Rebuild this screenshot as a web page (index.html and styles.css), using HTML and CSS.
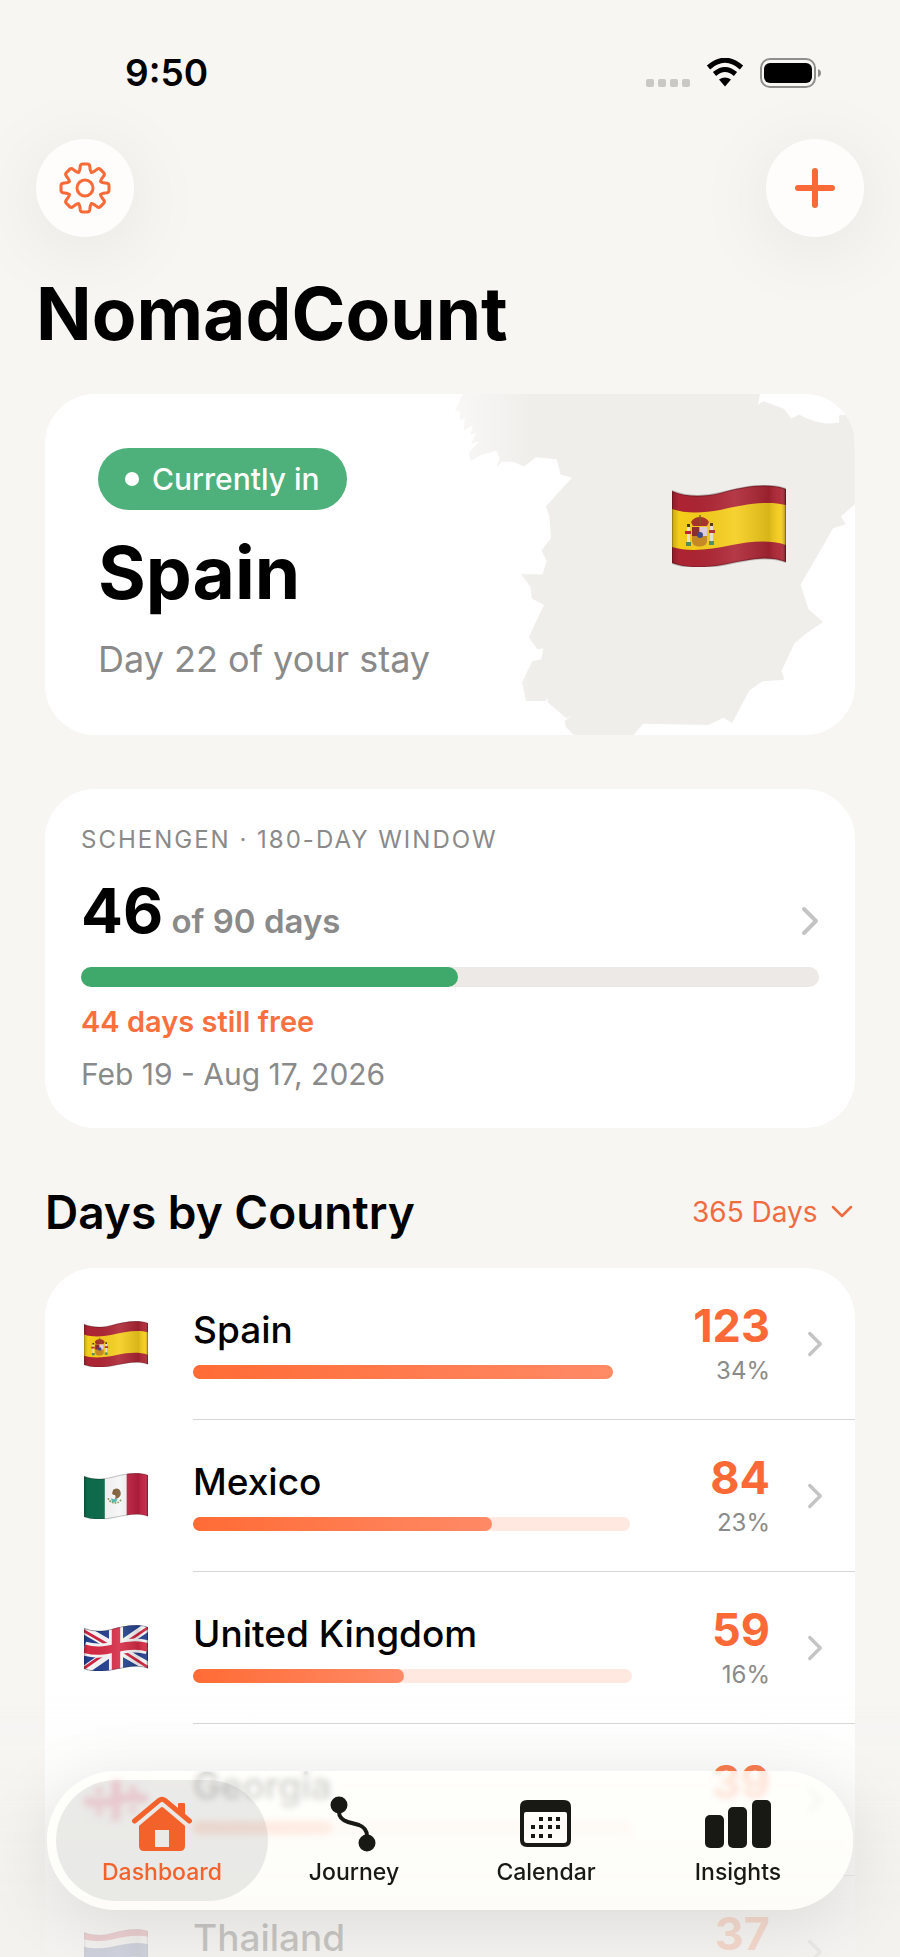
FILE: index.html
```html
<!DOCTYPE html>
<html lang="en">
  <head>
    <meta charset="UTF-8" />
    <meta name="viewport" content="width=device-width, initial-scale=1.0, viewport-fit=cover" />
    <title>NomadCount</title>
    <link rel="stylesheet" href="styles.css">
  </head>

  <body>
    <!-- shared icons and flags -->
    <svg class="defs" width="0" height="0" aria-hidden="true">
      <defs>
        <clipPath id="wave">
          <path d="M0 6C14 12 32 12 48 8C70 2 94 -3 114 4V77C96 70 76 75 60 78C38 83 16 84 0 78Z" />
        </clipPath>
        <linearGradient id="cloth" x1="0" x2="1" y1="0" y2="0">
          <stop offset="0" stop-color="#000" stop-opacity="0.2" />
          <stop offset="0.06" stop-color="#000" stop-opacity="0" />
          <stop offset="0.55" stop-color="#fff" stop-opacity="0.1" />
          <stop offset="0.85" stop-color="#000" stop-opacity="0.12" />
          <stop offset="0.95" stop-color="#fff" stop-opacity="0.05" />
          <stop offset="1" stop-color="#000" stop-opacity="0.35" />
        </linearGradient>
        <symbol id="shade" viewBox="0 0 114 82">
          <path d="M0 6C14 12 32 12 48 8C70 2 94 -3 114 4V77C96 70 76 75 60 78C38 83 16 84 0 78Z" fill="url(#cloth)" />
          <path d="M0 6C14 12 32 12 48 8C70 2 94 -3 114 4V77C96 70 76 75 60 78C38 83 16 84 0 78Z" fill="none" stroke="#000" stroke-opacity="0.22" stroke-width="2" />
        </symbol>
        <symbol id="flag-es" viewBox="0 0 114 82">
          <g clip-path="url(#wave)">
            <rect width="114" height="82" fill="#ad2433" />
            <path d="M0 24C14 29 32 28 48 25C70 20 94 15 114 20V60C96 54 76 57 60 60C38 65 16 67 0 62Z" fill="#f5cd1b" />
            <path d="M20 42h15v14q0 5-7 5.500q-8 0-8-5.500z" fill="#c98a22" />
            <path d="M20 42h7.500v9H20z" fill="#8f2a2e" />
            <path d="M27.500 42H35v9h-7.500z" fill="#e3cfe0" />
            <circle cx="28" cy="50" r="3" fill="#3b4a8c" />
            <path d="M19 37q3-5 9-5t9 5l-2 4H21z" fill="#a8322b" />
            <path d="M27.300 30h1.400v9h-1.400z" fill="#7a5a16" />
            <path d="M15 42h3v15h-3zM38 41h3v15h-3z" fill="#e9e2d6" />
            <path d="M13 46h6v3h-6zM37 45h6v3h-6z" fill="#b52b30" />
            <path d="M14 57h5v4h-5zM37 56h5v4h-5z" fill="#4e8f5f" />
            <path d="M15 39h3v3h-3zM38 38h3v3h-3z" fill="#4a3a12" />
          </g>
          <use href="#shade" width="114" height="82" />
        </symbol>
        <symbol id="flag-mx" viewBox="0 0 114 82">
          <g clip-path="url(#wave)">
            <rect width="114" height="82" fill="#f6f6f6" />
            <rect width="37" height="82" fill="#0d6b4b" />
            <rect x="76" width="38" height="82" fill="#c01f40" />
            <path d="M43 45a13 13 0 0 0 24 1" fill="none" stroke="#7f9a52" stroke-width="3" stroke-dasharray="3 2" />
            <path d="M52 30q10-6 13 3q2 8-5 12l-6 2q4-5 1-8q-4 1-5-3z" fill="#7b5a33" />
            <path d="M48 45q6 3 12 1l-3 6h-7z" fill="#4cb5ab" />
          </g>
          <use href="#shade" width="114" height="82" />
        </symbol>
        <symbol id="flag-gb" viewBox="0 0 114 82">
          <g clip-path="url(#wave)">
            <rect width="114" height="82" fill="#24408e" />
            <path d="M-4 6L118 76M-4 84L118 0" stroke="#f6f6f6" stroke-width="16" />
            <path d="M-4 8L54 42M62 42L118 78M-4 80L50 42M62 40L118 2" stroke="#cf2440" stroke-width="5" />
            <path d="M57 0V82" stroke="#f6f6f6" stroke-width="25" />
            <path d="M0 42C20 48 36 46 57 41S96 34 114 40" fill="none" stroke="#f6f6f6" stroke-width="25" />
            <path d="M57 0V82" stroke="#d52b45" stroke-width="15" />
            <path d="M0 42C20 48 36 46 57 41S96 34 114 40" fill="none" stroke="#d52b45" stroke-width="15" />
          </g>
          <use href="#shade" width="114" height="82" />
        </symbol>
        <symbol id="flag-ge" viewBox="0 0 114 82">
          <g clip-path="url(#wave)">
            <rect width="114" height="82" fill="#f8f8f8" />
            <path d="M57 0V82M0 42C20 48 36 46 57 41S96 34 114 40" fill="none" stroke="#f0285a" stroke-width="16" />
            <path d="M27 17v16M19 25h16M87 14v16M79 22h16M27 54v16M19 62h16M87 50v16M79 58h16" stroke="#f0285a" stroke-width="6" />
          </g>
        </symbol>
        <symbol id="flag-th" viewBox="0 0 114 82">
          <g clip-path="url(#wave)">
            <rect width="114" height="82" fill="#c8243c" />
            <path d="M0 18C14 23 32 22 48 19C70 14 94 9 114 14V66C96 60 76 63 60 66C38 71 16 73 0 68Z" fill="#f4f4f4" />
            <path d="M0 31C14 36 32 35 48 32C70 27 94 22 114 27V53C96 47 76 50 60 53C38 58 16 60 0 55Z" fill="#2c3f8c" />
          </g>
          <use href="#shade" width="114" height="82" />
        </symbol>
        <symbol id="chevron" viewBox="0 0 18 30">
          <path d="M3 3L15 15L3 27" fill="none" stroke="currentColor" stroke-width="4" stroke-linecap="round" stroke-linejoin="round" />
        </symbol>
        <path id="tooth" d="M-6.500 -15.700Q-5.500 -16.600 -5.200 -18.500L-4.700 -22Q-4.300 -24 -2.300 -24H2.300Q4.300 -24 4.700 -22L5.200 -18.500Q5.500 -16.600 6.500 -15.700" />
      </defs>
    </svg>

    <div class="status-bar">
      <time>9:50</time>
      <div class="status-icons">
        <svg class="signal" viewBox="0 0 44 30" fill="#c9c8c5">
          <rect x="0" y="21" width="8" height="8" rx="2" />
          <rect x="12" y="21" width="8" height="8" rx="2" />
          <rect x="24" y="21" width="8" height="8" rx="2" />
          <rect x="36" y="21" width="8" height="8" rx="2" />
        </svg>
        <svg class="wifi" viewBox="0 0 38 30">
          <path d="M2.500 9.500Q19 -5 35.500 9.500" fill="none" stroke="#000" stroke-width="5" />
          <path d="M8.500 16Q19 7 29.500 16" fill="none" stroke="#000" stroke-width="5" />
          <path d="M13 21.500Q19 17.500 25 21.500L19 28.500Z" />
        </svg>
        <svg class="battery" viewBox="0 0 62 30">
          <rect x="1" y="1" width="54" height="28" rx="9" fill="none" stroke="#8e8e8c" stroke-width="2" />
          <rect x="4" y="5" width="48" height="20" rx="6" />
          <path d="M58 11q3 1 3 4t-3 4z" fill="#8e8e8c" />
        </svg>
      </div>
    </div>

    <main class="content">
      <header class="toolbar">
        <button class="round-btn" type="button" aria-label="Settings">
          <svg width="54" height="54" viewBox="-27 -27 54 54" fill="none" stroke="currentColor" stroke-width="3" stroke-linecap="round">
            <circle r="8" />
            <use href="#tooth" />
            <use href="#tooth" transform="rotate(45)" />
            <use href="#tooth" transform="rotate(90)" />
            <use href="#tooth" transform="rotate(135)" />
            <use href="#tooth" transform="rotate(180)" />
            <use href="#tooth" transform="rotate(225)" />
            <use href="#tooth" transform="rotate(270)" />
            <use href="#tooth" transform="rotate(315)" />
          </svg>
        </button>
        <button class="round-btn" type="button" aria-label="Add stay">
          <svg width="46" height="46" viewBox="0 0 46 46">
            <path d="M23 6V40M6 23H40" stroke="currentColor" stroke-width="6" stroke-linecap="round" />
          </svg>
        </button>
      </header>

      <h1>NomadCount</h1>

      <section class="card current">
        <svg class="map" viewBox="0 72 1275 1026" aria-hidden="true">
          <defs>
            <linearGradient id="map-fade" gradientUnits="userSpaceOnUse" x1="60" x2="310" y1="0" y2="0">
              <stop offset="0" stop-color="#f0eeeb" stop-opacity="0.4" />
              <stop offset="1" stop-color="#f0eeeb" />
            </linearGradient>
          </defs>
          <path fill="url(#map-fade)" d="M96 72L72 122L88 126L86 150L102 146L98 182L126 166L118 196L136 188L120 222L146 214L114 248L118 274L150 256L196 242L206 264L198 292L214 276L246 276L280 290L316 262L378 268L390 314L424 324L346 410L356 440L361 505L332 543L348 574L336 614H270L299 652L304 688L340 706L294 804L320 840L338 838L332 870L304 876L274 940L286 996H346L348 984L352 1000L408 1048L426 1038L402 1056L406 1074L430 1098H610L638 1064L834 1068L880 1046L906 1062L958 964L998 936L1064 932L1054 906L1094 822L1132 790L1180 758L1136 720L1112 646L1210 476L1248 464L1234 440L1275 404V134L1228 136V158Q1170 170 1108 134L1084 146L1062 116L1000 94L984 104L990 72Z" />
        </svg>
        <div class="current-info">
          <span class="badge">Currently in</span>
          <h2>Spain</h2>
          <p>Day 22 of your stay</p>
        </div>
        <svg class="flag-large" role="img" aria-label="Spain"><use href="#flag-es" /></svg>
      </section>

      <section class="card schengen">
        <h3>SCHENGEN · 180-DAY WINDOW</h3>
        <div class="count-line">
          <p><strong>46</strong> of 90 days</p>
          <svg class="chevron"><use href="#chevron" /></svg>
        </div>
        <div class="meter"><div class="meter-fill" style="width: 51.1%"></div></div>
        <p class="free">44 days still free</p>
        <p class="range">Feb 19 - Aug 17, 2026</p>
      </section>

      <div class="section-head">
        <h2>Days by Country</h2>
        <label class="period">
          <select aria-label="Period">
            <option>365 Days</option>
            <option>180 Days</option>
            <option>90 Days</option>
          </select>
          <svg viewBox="0 0 22 14"><path d="M2 2L11 11L20 2" fill="none" stroke="currentColor" stroke-width="2.500" stroke-linecap="round" stroke-linejoin="round" /></svg>
        </label>
      </div>

      <section class="card countries">
        <a class="country" href="#spain">
          <svg class="flag"><use href="#flag-es" /></svg>
          <div class="country-body">
            <div class="country-main">
              <span class="name">Spain</span>
              <div class="bar"><div class="bar-fill" style="width: 100%"></div></div>
            </div>
            <div class="country-days"><strong>123</strong><span>34%</span></div>
            <svg class="chevron-sm"><use href="#chevron" /></svg>
          </div>
        </a>
        <a class="country" href="#mexico">
          <svg class="flag"><use href="#flag-mx" /></svg>
          <div class="country-body">
            <div class="country-main">
              <span class="name">Mexico</span>
              <div class="bar"><div class="bar-fill" style="width: 68.3%"></div></div>
            </div>
            <div class="country-days"><strong>84</strong><span>23%</span></div>
            <svg class="chevron-sm"><use href="#chevron" /></svg>
          </div>
        </a>
        <a class="country" href="#united-kingdom">
          <svg class="flag"><use href="#flag-gb" /></svg>
          <div class="country-body">
            <div class="country-main">
              <span class="name">United Kingdom</span>
              <div class="bar"><div class="bar-fill" style="width: 48%"></div></div>
            </div>
            <div class="country-days"><strong>59</strong><span>16%</span></div>
            <svg class="chevron-sm"><use href="#chevron" /></svg>
          </div>
        </a>
        <a class="country" href="#georgia">
          <svg class="flag"><use href="#flag-ge" /></svg>
          <div class="country-body">
            <div class="country-main">
              <span class="name">Georgia</span>
              <div class="bar"><div class="bar-fill" style="width: 31.7%"></div></div>
            </div>
            <div class="country-days"><strong>39</strong><span></span></div>
            <svg class="chevron-sm"><use href="#chevron" /></svg>
          </div>
        </a>
        <a class="country" href="#thailand">
          <svg class="flag"><use href="#flag-th" /></svg>
          <div class="country-body">
            <div class="country-main">
              <span class="name">Thailand</span>
              <div class="bar"><div class="bar-fill" style="width: 30.1%"></div></div>
            </div>
            <div class="country-days"><strong>37</strong><span></span></div>
            <svg class="chevron-sm"><use href="#chevron" /></svg>
          </div>
        </a>
      </section>
    </main>

    <div class="bottom-fade"></div>

    <nav class="tab-bar">
      <a class="tab active" href="#dashboard">
        <svg viewBox="0 0 62 56" width="62" height="56" fill="currentColor">
          <path d="M3.500 25L28 4.500Q31 2 34 4.500L58.500 25" fill="none" stroke="currentColor" stroke-width="5" stroke-linecap="round" />
          <path d="M48 7h5q1 0 1 1v14l-7-6V8q0-1 1-1z" />
          <path fill-rule="evenodd" d="M8 27L31 9L54 27V50Q54 55 49 55H13Q8 55 8 50ZM24 34V51H38V34Z" />
          <path d="M6 29.500L28.500 10.500Q31 8.500 33.500 10.500L56 29.500" fill="none" stroke="#eae9e6" stroke-width="3" />
        </svg>
        <span>Dashboard</span>
      </a>
      <a class="tab" href="#journey">
        <svg viewBox="0 0 62 56" width="62" height="56" fill="currentColor">
          <circle cx="16" cy="9" r="8.500" />
          <circle cx="44" cy="47" r="8.500" />
          <path d="M16 12V16Q16 23 25 26L36 29Q44 32 44 40V44" fill="none" stroke="currentColor" stroke-width="4" />
        </svg>
        <span>Journey</span>
      </a>
      <a class="tab" href="#calendar">
        <svg viewBox="0 0 62 56" width="62" height="56" fill="currentColor">
          <path fill-rule="evenodd" d="M11 4H49Q56 4 56 11V44Q56 51 49 51H12Q5 51 5 44V11Q5 4 12 4ZM11 16Q9 16 9 18V44Q9 47 12 47H49Q52 47 52 44V18Q52 16 50 16Z" />
          <path d="M24 21h4v4h-4zM33 21h4v4h-4zM41 21h4v4h-4zM16 29h4v4h-4zM24 29h4v4h-4zM33 29h4v4h-4zM41 29h4v4h-4zM16 38h4v4h-4zM24 38h4v4h-4zM33 38h4v4h-4z" />
        </svg>
        <span>Calendar</span>
      </a>
      <a class="tab" href="#insights">
        <svg viewBox="0 0 66 56" width="66" height="56" fill="currentColor">
          <rect x="0" y="19" width="19" height="33" rx="5" />
          <rect x="23" y="11" width="19" height="41" rx="5" />
          <rect x="47" y="4" width="19" height="48" rx="5" />
        </svg>
        <span>Insights</span>
      </a>
    </nav>
  </body>
</html>
```

FILE: styles.css
```css
* {
  box-sizing: border-box;
}

html,
body {
  height: 100%;
}

body {
  margin: 0;
  display: flex;
  flex-direction: column;
  overflow: hidden;
  font-family: Inter, 'Liberation Sans', sans-serif;
  color: #000;
  background: #f7f6f3;
}

h1,
h2,
h3,
p {
  margin: 0;
}

a {
  color: inherit;
  text-decoration: none;
}

.defs {
  position: absolute;
}

/* status bar */

.status-bar {
  flex: none;
  display: flex;
  justify-content: space-between;
  align-items: center;
  padding: 50px 78px 0 125px;
}

.status-bar time {
  font-size: 37px;
  line-height: 46px;
  font-weight: 600;
}

.status-icons {
  display: flex;
  align-items: center;
}

.signal {
  width: 44px;
  height: 30px;
}

.wifi {
  width: 38px;
  height: 30px;
  margin: 0 16px;
}

.battery {
  width: 62px;
  height: 30px;
}

/* scrolling content */

.content {
  flex: 1;
  min-height: 0;
  padding: 43px 45px 0;
  overflow-y: auto;
  scrollbar-width: none;
}

.toolbar {
  display: flex;
  justify-content: space-between;
  margin: 0 -9px;
}

.round-btn {
  display: flex;
  justify-content: center;
  align-items: center;
  width: 98px;
  height: 98px;
  padding: 0;
  border: 0;
  border-radius: 50%;
  color: #f96a38;
  background: #fffdfb;
  box-shadow: 0 12px 80px rgba(0, 0, 0, 0.08);
}

h1 {
  margin: 32px -9px 35px;
  font-size: 73px;
  line-height: 90px;
  font-weight: 700;
}

.card {
  border-radius: 50px;
  background: #fff;
}

/* current country */

.current {
  position: relative;
  display: flex;
  justify-content: space-between;
  align-items: flex-start;
  padding: 54px 69px 53px 53px;
  overflow: hidden;
}

.map {
  position: absolute;
  top: 0;
  right: 0;
  height: 100%;
}

.current-info {
  position: relative;
  display: flex;
  flex-direction: column;
  align-items: flex-start;
  gap: 18px;
}

.badge {
  display: flex;
  align-items: center;
  gap: 13px;
  height: 62px;
  padding: 0 27px;
  border-radius: 31px;
  font-size: 30px;
  font-weight: 500;
  color: #fff;
  background: #4eb07a;
}

.badge::before {
  content: '';
  width: 14px;
  height: 14px;
  border-radius: 50%;
  background: #fff;
}

.current h2 {
  font-size: 73px;
  line-height: 90px;
  font-weight: 700;
}

.current p {
  font-size: 36px;
  line-height: 46px;
  color: #8a8a8a;
}

.flag-large {
  position: relative;
  width: 114px;
  height: 82px;
  margin-top: 37px;
}

/* schengen window */

.schengen {
  display: flex;
  flex-direction: column;
  gap: 18px;
  margin-top: 54px;
  padding: 36px 36px 37px;
}

.schengen h3 {
  font-size: 24px;
  line-height: 30px;
  font-weight: 400;
  letter-spacing: 2px;
  color: #8a8a8a;
}

.count-line {
  display: flex;
  justify-content: space-between;
  align-items: baseline;
  height: 76px;
}

.count-line p {
  font-size: 33px;
  line-height: 40px;
  font-weight: 600;
  color: #8a8a8a;
}

.count-line strong {
  font-size: 62px;
  line-height: 76px;
  font-weight: 700;
  color: #000;
}

.chevron {
  width: 18px;
  height: 30px;
  align-self: center;
  margin-top: 20px;
  color: #c4c4c4;
}

.meter {
  height: 20px;
  border-radius: 10px;
  background: #ece9e7;
}

.meter-fill {
  height: 100%;
  border-radius: 10px;
  background: #3fa96b;
}

.free {
  font-size: 29px;
  line-height: 34px;
  font-weight: 600;
  color: #f9703e;
}

.range {
  font-size: 30px;
  line-height: 34px;
  color: #8a8a8a;
}

/* days by country */

.section-head {
  display: flex;
  justify-content: space-between;
  align-items: center;
  margin: 55px 0 27px;
}

.section-head h2 {
  font-size: 46px;
  line-height: 58px;
  font-weight: 600;
}

.period {
  display: flex;
  align-items: center;
  gap: 13px;
  color: #f06c40;
}

.period select {
  appearance: none;
  padding: 0;
  border: 0;
  font: inherit;
  font-size: 28px;
  line-height: 34px;
  color: inherit;
  background: none;
}

.period svg {
  width: 22px;
  height: 14px;
  margin-right: 2px;
}

.countries {
  overflow: hidden;
}

.country {
  display: flex;
  align-items: center;
  height: 152px;
  padding-left: 39px;
}

.flag {
  flex: none;
  width: 64px;
  height: 46px;
  margin-right: 45px;
}

.country-body {
  flex: 1;
  display: flex;
  align-items: center;
  height: 100%;
  padding-right: 32px;
  border-bottom: 1px solid #d6d6d6;
}

.country-main {
  flex: 1;
  display: flex;
  flex-direction: column;
  gap: 13px;
}

.name {
  font-size: 37px;
  line-height: 44px;
  font-weight: 500;
}

.bar {
  height: 14px;
  border-radius: 7px;
  background: #ffe8e0;
}

.bar-fill {
  height: 100%;
  border-radius: 7px;
  background: linear-gradient(90deg, #ff6b35, #ff8a66);
}

.country-days {
  display: flex;
  flex-direction: column;
  align-items: flex-end;
  gap: 6px;
  margin: 0 37px 0 80px;
}

.country-days strong {
  font-size: 45px;
  line-height: 48px;
  font-weight: 700;
  color: #fb6a36;
}

.country-days span {
  min-height: 30px;
  font-size: 24px;
  line-height: 30px;
  color: #8a8a8a;
}

.chevron-sm {
  width: 16px;
  height: 26px;
  color: #c4c4c4;
}

/* tab bar */

.bottom-fade {
  position: fixed;
  left: 0;
  right: 0;
  bottom: 0;
  height: 280px;
  background: linear-gradient(
    rgba(241, 240, 237, 0),
    rgba(241, 240, 237, 0.15) 33%,
    rgba(241, 240, 237, 0.82) 83%,
    rgba(241, 240, 237, 0.82)
  );
}

.tab-bar {
  position: fixed;
  left: 47px;
  right: 47px;
  bottom: 47px;
  display: flex;
  height: 139px;
  padding: 9px 19px;
  border-radius: 70px;
  background: rgba(255, 255, 251, 0.76);
  backdrop-filter: blur(3px);
  box-shadow: 0 12px 70px rgba(0, 0, 0, 0.1);
}

.tab {
  position: relative;
  flex: 1;
  display: flex;
  flex-direction: column;
  align-items: center;
  gap: 6px;
  padding-top: 16px;
  font-size: 23px;
  line-height: 28px;
  font-weight: 500;
  color: #181814;
}

.tab svg,
.tab span {
  position: relative;
}

.tab.active {
  color: #f4622c;
}

.tab.active::before {
  content: '';
  position: absolute;
  inset: 0 -10px;
  border-radius: 61px;
  background: rgba(0, 0, 0, 0.08);
}
```
